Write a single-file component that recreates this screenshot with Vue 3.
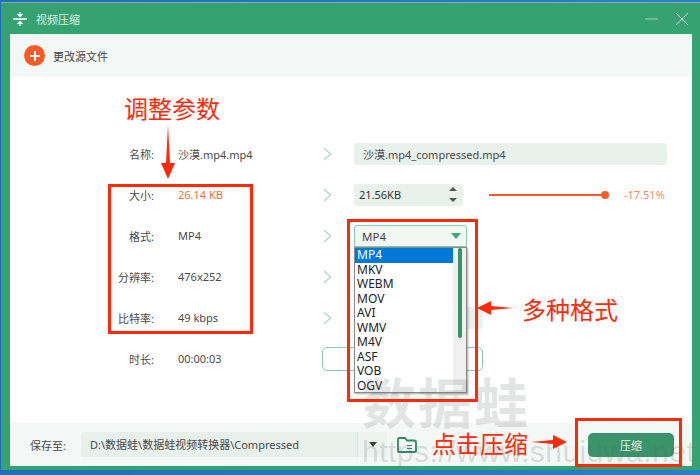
<script setup>
const rows = [
  { label: '名称:', value: '沙漠.mp4.mp4' },
  { label: '大小:', value: '26.14 KB', hot: true },
  { label: '格式:', value: 'MP4' },
  { label: '分辨率:', value: '476x252' },
  { label: '比特率:', value: '49 kbps' },
]
const formats = ['MP4', 'MKV', 'WEBM', 'MOV', 'AVI', 'WMV', 'M4V', 'ASF', 'VOB', 'OGV']
</script>

<template>
  <div class="desk">
    <div class="win">
      <header class="title">
        <svg class="t-ico" width="14" height="14" viewBox="0 0 14 14">
          <path d="M0 7h14" stroke="#fff" stroke-width="1.6" />
          <path d="M7 0v2.600M4.600 2.400 7 5l2.400-2.600zM7 14v-2.600M4.600 11.600 7 9l2.400 2.600z" fill="#fff" stroke="#fff" stroke-width="1" />
        </svg>
        <span class="t-text">视频压缩</span>
        <span class="spacer"></span>
        <svg width="14" height="14" viewBox="0 0 14 14" class="t-min"><path d="M0 7h13" stroke="#8fcdb0" stroke-width="1.2" /></svg>
        <svg width="14" height="14" viewBox="0 0 14 14" class="t-close"><path d="M1 1l12 12M13 1 1 13" stroke="#cfe9dc" stroke-width="1" /></svg>
      </header>

      <div class="body">
        <div class="toolbar">
          <span class="add">
            <svg width="12" height="12" viewBox="0 0 12 12"><path d="M6 1v10M1 6h10" stroke="#fff" stroke-width="2" /></svg>
          </span>
          <span class="add-text">更改源文件</span>
        </div>

        <main class="main">
          <div class="grid">
            <template v-for="(r, i) in rows" :key="r.label">
              <span class="lab">{{ r.label }}</span>
              <span class="val" :class="{ hot: r.hot }">{{ r.value }}</span>
              <svg class="chev" width="9" height="14" viewBox="0 0 9 14"><path d="M1 1l6.500 6L1 13" fill="none" stroke="#b3d6c6" stroke-width="1.300" /></svg>
              <div class="right">
                <div v-if="i === 0" class="field name">沙漠.mp4_compressed.mp4</div>
                <div v-else-if="i === 1" class="size-row">
                  <div class="field size">
                    <span>21.56KB</span>
                    <span class="spin"><i class="up"></i><i class="down"></i></span>
                  </div>
                  <div class="track"><i class="knob"></i></div>
                  <span class="pct">-17.51%</span>
                </div>
                <div v-else-if="i === 4" class="field bit"></div>
              </div>
            </template>
            <span class="lab">时长:</span>
            <span class="val">00:00:03</span>
            <span></span>
            <div class="right"><div class="outline"></div></div>
          </div>
        </main>

        <footer class="foot">
          <span class="save">保存至:</span>
          <div class="path">D:\数据蛙\数据蛙视频转换器\Compressed</div>
          <div class="path-arrow"><i></i></div>
          <svg class="folder" width="20" height="16" viewBox="0 0 20 16">
            <path d="M1 14V2.500Q1 1 2.500 1H8l2 2.500h7.500Q19 3.500 19 5v9q0 1-1 1H2q-1 0-1-1z" fill="none" stroke="#2f8a63" stroke-width="1.800" />
            <path d="M10 8.500h5M10 11.500h5" stroke="#2f8a63" stroke-width="1.200" />
          </svg>
          <span class="spacer"></span>
          <button class="go">压缩</button>
        </footer>
      </div>
    </div>

    <!-- dropdown lying over the rows -->
    <div class="select">
      <div class="sel-head"><span>MP4</span><i></i></div>
      <div class="list">
        <div class="opts">
          <div v-for="(f, i) in formats" :key="f" class="opt" :class="{ on: i === 0 }">{{ f }}</div>
        </div>
        <div class="scroll"><i></i></div>
      </div>
    </div>

    <!-- watermark -->
    <div class="wm wm1">数据蛙</div>
    <div class="wm wm2">https://www.shujuwa.net</div>

    <!-- annotations -->
    <div class="box b1"></div>
    <div class="box b2"></div>
    <div class="box b3"></div>
    <div class="note n1">调整参数</div>
    <div class="note n2">多种格式</div>
    <div class="note n3">点击压缩</div>
    <svg class="arr a1" width="14" height="55" viewBox="0 0 14 55"><path d="M7 0 9 38h5L7 54 0 38h5z" fill="#ff2a0a" /></svg>
    <svg class="arr a2" width="36" height="14" viewBox="0 0 36 14"><path d="M0 7 14 0v5l22 2-22 2v5z" fill="#ff2a0a" /></svg>
    <svg class="arr a3" width="36" height="14" viewBox="0 0 36 14"><path d="M36 7 22 0v5L0 7l22 2v5z" fill="#ff2a0a" /></svg>
  </div>
</template>

<style>
html, body { margin: 0; background: #1f6fc0; }
</style>

<style scoped>
.desk {
  position: relative;
  width: 700px;
  height: 475px;
  overflow: hidden;
  box-sizing: border-box;
  padding: 2px 0 5px 1px;
  background: linear-gradient(90deg, #1e6fb8, #2b7fc9);
  font-family: "Noto Sans", "Noto Sans CJK SC", sans-serif;
  font-size: 11px;
  color: #4a4a4a;
}
.win {
  height: 100%;
  display: flex;
  flex-direction: column;
  background: #36a271;
  box-sizing: border-box;
  padding: 0 8px 4px 9px;
  border-top: 1px solid #8fa7b0;
}
.title {
  height: 31px;
  flex: none;
  display: flex;
  align-items: center;
  color: #d9efe4;
  font-size: 11px;
}
.t-ico { margin: 0 9px 0 3px; }
.spacer { flex: 1; }
.t-min { margin-right: 16px; }
.t-close { margin-right: 3px; }
.body {
  flex: 1;
  min-height: 0;
  display: flex;
  flex-direction: column;
  background: #fff;
}
.toolbar {
  height: 43px;
  flex: none;
  display: flex;
  align-items: center;
  padding-left: 14px;
  background: #f3f8f6;
}
.add {
  width: 21px;
  height: 21px;
  border-radius: 50%;
  background: #fa5a28;
  display: flex;
  align-items: center;
  justify-content: center;
}
.add-text { margin-left: 8px; color: #444; }
.main { flex: 1; padding-top: 56px; }
.grid {
  display: grid;
  grid-template-columns: 144px 169px 31px 1fr;
  grid-auto-rows: 41px;
  align-items: center;
  position: relative;
}
.lab { text-align: right; white-space: nowrap; }
.val { padding-left: 24px; white-space: nowrap; }
.hot { color: #fa6a3c; }
.right { min-width: 0; }
.field {
  background: #e9f1ed;
  border-radius: 3px;
  height: 22px;
  display: flex;
  align-items: center;
  box-sizing: border-box;
}
.name { width: 313px; padding-left: 9px; }
.size-row { display: flex; align-items: center; }
.size {
  width: 109px;
  padding: 0 6px 0 5px;
  justify-content: space-between;
  color: #333;
}
.spin { display: flex; flex-direction: column; gap: 7px; }
.spin i { display: block; width: 0; height: 0; border-left: 4px solid transparent; border-right: 4px solid transparent; }
.spin .up { border-bottom: 4px solid #555; }
.spin .down { border-top: 4px solid #555; }
.track {
  position: relative;
  width: 116px;
  height: 2px;
  margin-left: 26px;
  background: #fa5a28;
}
.knob {
  position: absolute;
  right: -4px;
  top: -3px;
  width: 8px;
  height: 8px;
  border-radius: 50%;
  background: #fa5a28;
}
.pct { margin-left: 19px; color: #fa8a66; white-space: nowrap; }
.bit { width: 129px; }
.outline {
  width: 161px;
  height: 24px;
  margin-left: -32px;
  box-sizing: border-box;
  border: 1px solid #8fc9ae;
  border-radius: 5px;
}
.foot {
  height: 43px;
  flex: none;
  display: flex;
  align-items: center;
  background: #f3f8f6;
  padding-left: 20px;
  padding-right: 18px;
}
.save { width: 51px; flex: none; white-space: nowrap; }
.path {
  width: 276px;
  height: 25px;
  line-height: 25px;
  flex: none;
  box-sizing: border-box;
  padding-left: 9px;
  background: #e7f0eb;
  border-radius: 3px 0 0 3px;
  white-space: nowrap;
  overflow: hidden;
}
.path-arrow {
  width: 30px;
  height: 25px;
  flex: none;
  display: flex;
  align-items: center;
  justify-content: center;
  border-left: 1px solid #d8e2dd;
  box-sizing: border-box;
  background: #ecf3ef;
}
.path-arrow i { width: 0; height: 0; border-left: 4px solid transparent; border-right: 4px solid transparent; border-top: 5px solid #444; }
.folder { margin-left: 10px; }
.go {
  width: 86px;
  height: 24px;
  border: 0;
  border-radius: 5px;
  background: #3b9469;
  color: #e6f5ee;
  font: inherit;
}

.select {
  position: absolute;
  left: 354px;
  top: 225px;
  width: 113px;
}
.sel-head {
  height: 22px;
  box-sizing: border-box;
  border: 1px solid #8fc9ae;
  border-radius: 3px 3px 0 0;
  background: #f1f7f3;
  display: flex;
  align-items: center;
  justify-content: space-between;
  padding: 0 5px 0 7px;
  font-size: 11.500px;
  color: #444;
}
.sel-head i { width: 0; height: 0; border-left: 5px solid transparent; border-right: 5px solid transparent; border-top: 6px solid #3fa578; }
.list {
  display: flex;
  height: 146px;
  background: #fff;
  border: 1px solid #8a8a8a;
  box-sizing: border-box;
  box-shadow: 1px 1px 2px rgba(0, 0, 0, 0.35);
  overflow: hidden;
}
.opts { flex: 1; }
.opt {
  height: 14.550px;
  line-height: 14.550px;
  padding-left: 2px;
  font-size: 12px;
  color: #222;
}
.opt.on { background: #0078d7; color: #fff; }
.scroll {
  width: 13px;
  flex: none;
  background: #f0f0f0;
  display: flex;
  justify-content: center;
}
.scroll i { display: block; width: 4px; height: 90px; background: #3a9268; border-radius: 2px; }

.wm {
  position: absolute;
  pointer-events: none;
  white-space: nowrap;
}
.wm1 {
  left: 362px;
  top: 372px;
  color: rgba(90, 100, 95, 0.17);
  font-size: 54px;
  line-height: 62px;
  letter-spacing: 2px;
  font-weight: 700;
}
.wm2 {
  left: 362px;
  top: 434px;
  color: rgba(90, 100, 95, 0.2);
  font-family: "Liberation Sans", sans-serif;
  font-size: 30px;
  line-height: 36px;
  letter-spacing: 0.500px;
}

.box { position: absolute; box-sizing: border-box; border: 3px solid #ff2a0a; }
.b1 { left: 108px; top: 184px; width: 145px; height: 150px; }
.b2 { left: 347px; top: 219px; width: 131px; height: 183px; }
.b3 { left: 575px; top: 418px; width: 107px; height: 49px; }
.note {
  position: absolute;
  color: #ff2a0a;
  font-size: 24px;
  line-height: 30px;
  white-space: nowrap;
  font-family: "Noto Sans CJK SC", sans-serif;
}
.n1 { left: 124px; top: 93px; }
.n2 { left: 522px; top: 294px; }
.n3 { left: 432px; top: 428px; }
.arr { position: absolute; }
.a1 { left: 161px; top: 125px; }
.a2 { left: 477px; top: 301px; }
.a3 { left: 531px; top: 435px; }
</style>
